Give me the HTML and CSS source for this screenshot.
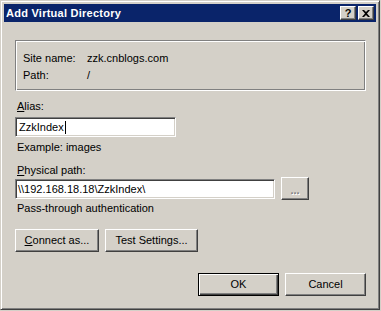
FILE: index.html
```html
<!DOCTYPE html>
<html>
<head>
<meta charset="utf-8">
<link rel="stylesheet" href="styles.css">
</head>
<body>
<div class="window">
  <div class="caption">
    <span class="caption-title">Add Virtual Directory</span>
    <div class="caption-btns">
      <div class="cbtn help">?</div>
      <div class="cbtn close">
        <svg width="8" height="7" viewBox="0 0 8 7"><path d="M0 0h2l2 2 2-2h2L5 3.5 8 7H6L4 5 2 7H0l3-3.5z" fill="#000"/></svg>
      </div>
    </div>
  </div>
  <div class="content">
    <div class="group">
      <div class="info-row"><span class="info-label">Site name:</span><span>zzk.cnblogs.com</span></div>
      <div class="info-row"><span class="info-label">Path:</span><span>/</span></div>
    </div>
    <div class="label alias-label"><u>A</u>lias:</div>
    <div class="field alias-field">ZzkIndex<span class="caret"></span></div>
    <div class="label example">Example: images</div>
    <div class="label phys-label"><u>P</u>hysical path:</div>
    <div class="phys-row">
      <div class="field phys-field">\\192.168.18.18\ZzkIndex\</div>
      <div class="btn browse"><span class="dots">...</span></div>
    </div>
    <div class="label pass">Pass-through authentication</div>
    <div class="btn-row">
      <div class="btn connect"><u>C</u>onnect as...</div>
      <div class="btn test">Test Settings...</div>
    </div>
    <div class="footer">
      <div class="btn default ok">OK</div>
      <div class="btn cancel">Cancel</div>
    </div>
  </div>
</div>
</body>
</html>
```
FILE: styles.css
```css
html, body {
  margin: 0;
  padding: 0;
  background: #d4d0c8;
}
body {
  font-family: "Liberation Sans", Arial, sans-serif;
  font-size: 11px;
  line-height: 13px;
  color: #000;
}
.window {
  width: 380px;
  height: 310px;
  box-sizing: border-box;
  border: 1px solid;
  border-color: #d4d0c8 #404040 #404040 #d4d0c8;
  box-shadow: inset 1px 1px #fff, inset -1px -1px #808080;
  padding: 3px;
  background: #d4d0c8;
  display: flex;
  flex-direction: column;
}
.caption {
  height: 18px;
  background: #0a246a;
  display: flex;
  align-items: center;
  justify-content: space-between;
  padding: 0 2px 0 2px;
}
.caption-title {
  color: #fff;
  font-weight: bold;
  font-size: 11px;
  letter-spacing: 0.25px;
}
.caption-btns {
  display: flex;
  gap: 2px;
}
.cbtn {
  width: 16px;
  height: 14px;
  box-sizing: border-box;
  background: #d4d0c8;
  border: 1px solid;
  border-color: #fff #404040 #404040 #fff;
  box-shadow: inset -1px -1px #808080;
  display: flex;
  align-items: center;
  justify-content: center;
  font-weight: bold;
  font-size: 11px;
  line-height: 11px;
}
.close svg { display: block; margin-left: -1px; }
.content {
  padding: 0 10px 0 11px;
  display: flex;
  flex-direction: column;
}
.group {
  margin-top: 18px;
  height: 51px;
  box-sizing: border-box;
  border: 1px solid;
  border-color: #808080 #fff #fff #808080;
  box-shadow: inset 1px 1px #fff, inset -1px -1px #808080;
  padding: 11px 7px 0 7px;
  display: flex;
  flex-direction: column;
  gap: 4px;
}
.info-row { display: flex; }
.info-label { width: 64px; }
.label { height: 13px; padding-left: 2px; }
.alias-label { margin-top: 9px; }
.field {
  height: 20px;
  box-sizing: border-box;
  background: #fff;
  border: 1px solid;
  border-color: #808080 #fff #fff #808080;
  box-shadow: inset 1px 1px #404040, inset -1px -1px #d4d0c8;
  padding: 3px 3px 0 3px;
  display: flex;
  align-items: flex-start;
  white-space: pre;
}
.alias-field { margin-top: 4px; width: 161px; }
.caret {
  display: inline-block;
  width: 1px;
  height: 13px;
  background: #000;
  margin-left: 1px;
}
.example { margin-top: 4px; }
.phys-label { margin-top: 10px; }
.phys-row {
  display: flex;
  align-items: flex-start;
  gap: 6px;
}
.phys-field { margin-top: 2px; width: 260px; padding-left: 2px; }
.btn {
  height: 23px;
  box-sizing: border-box;
  background: #d4d0c8;
  border: 1px solid;
  border-color: #fff #404040 #404040 #fff;
  box-shadow: inset -1px -1px #808080;
  display: flex;
  align-items: center;
  justify-content: center;
}
.browse { width: 28px; }
.dots {
  color: #808080;
  text-shadow: 1px 1px #fff;
  font-weight: bold;
  margin-top: 3px;
}
.pass { margin-top: 2px; }
.btn-row {
  margin-top: 14px;
  display: flex;
  gap: 6px;
}
.connect { width: 84px; }
.test { width: 93px; }
.footer {
  margin-top: 21px;
  display: flex;
  justify-content: flex-end;
  gap: 6px;
}
.ok, .cancel { width: 81px; }
.default {
  border-color: #000;
  box-shadow: inset 1px 1px #fff, inset -1px -1px #404040, inset -2px -2px #808080;
}
u { text-decoration: underline; text-underline-offset: 1px; }
```
